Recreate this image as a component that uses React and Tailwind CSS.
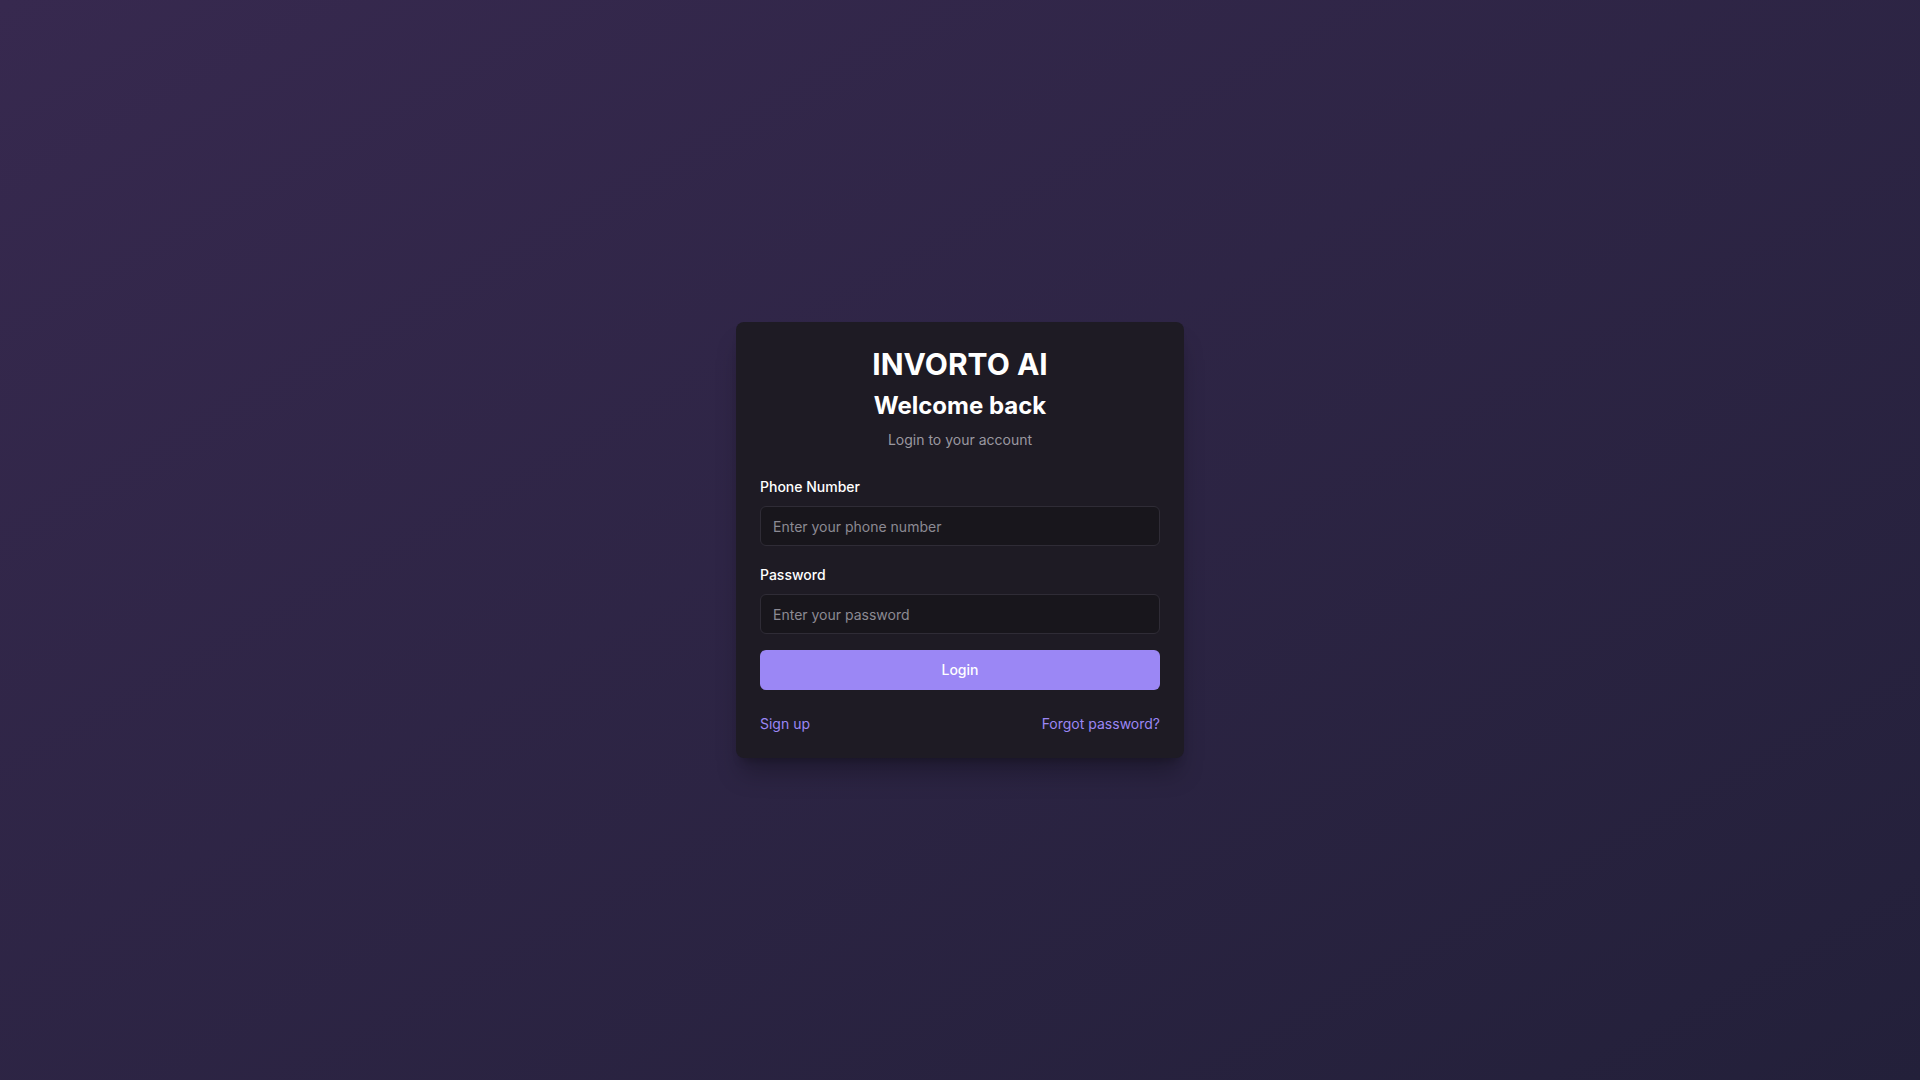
import React from 'react';

const Field = ({ label, type, placeholder, className }) => (
    <div className={className}>
        <label className="block text-sm font-medium leading-5 text-white">{label}</label>
        <input
            type={type}
            placeholder={placeholder}
            className="mt-[9px] h-10 w-full rounded-md border border-[#2f2c36] bg-[#18161c] px-3 text-sm text-white placeholder:text-[#8c8a93] outline-none"
        />
    </div>
);

const App = () => {
    return (
        <div className="min-h-screen flex items-center justify-center bg-linear-to-br from-[#37294f] to-[#23203a] font-['Inter',sans-serif]">
            <div className="w-full max-w-md rounded-lg bg-[#1e1b24] p-6 shadow-xl shadow-black/25">
                <div className="text-center">
                    <h1 className="text-3xl font-bold leading-9 text-white">INVORTO AI</h1>
                    <h2 className="mt-2 text-2xl font-bold leading-8 text-white">Welcome back</h2>
                    <p className="mt-2 text-sm leading-5 text-[#9a98a0]">Login to your account</p>
                </div>
                <form className="mt-[27px]" onSubmit={(e) => e.preventDefault()}>
                    <Field label="Phone Number" type="tel" placeholder="Enter your phone number" />
                    <Field label="Password" type="password" placeholder="Enter your password" className="mt-[19px]" />
                    <button className="mt-4 h-10 w-full rounded-md bg-[#9b87f5] text-sm font-medium text-white">Login</button>
                </form>
                <div className="mt-6 flex justify-between text-sm leading-5 text-[#9b87f5]">
                    <a href="#">Sign up</a>
                    <a href="#">Forgot password?</a>
                </div>
            </div>
        </div>
    );
};

export default App;
